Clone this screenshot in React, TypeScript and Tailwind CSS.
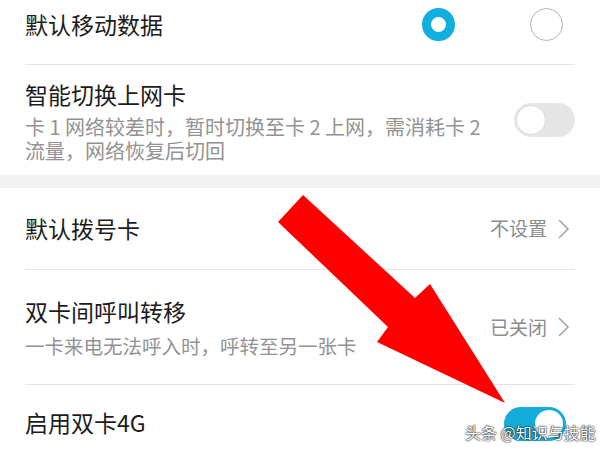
import React from 'react'

const font = { fontFamily: '"Noto Sans CJK SC", "Noto Sans", sans-serif' }

function Chevron() {
    return (
        <svg width="13" height="22" viewBox="0 0 13 22" className="ml-[10px]">
            <path
                d="M2 2 L11 11 L2 20"
                fill="none"
                stroke="#a6a6a6"
                strokeWidth="1.6"
            />
        </svg>
    )
}

function Toggle({ on }: { on: boolean }) {
    return on ? (
        <div className="w-[62px] h-[34px] rounded-full bg-[#14acdb] flex items-center justify-end p-[3px]">
            <div className="w-[28px] h-[28px] rounded-full bg-white" />
        </div>
    ) : (
        <div className="w-[61px] h-[34px] rounded-full bg-[#e6e6e6] flex items-center p-[2px]">
            <div className="w-[30px] h-[30px] rounded-full bg-white border border-[#dcdcdc]" />
        </div>
    )
}

export default function App() {
    return (
        <div
            className="relative w-[600px] h-[455px] overflow-hidden bg-white"
            style={font}
        >
            <div className="mx-[25px] h-[65px] pb-[15px] flex items-center border-b border-[#e3e3e3]">
                <span className="text-[23px] text-[#1c1c1c]">默认移动数据</span>
                <div className="ml-auto flex items-center gap-[75px] mr-[12px]">
                    <div className="w-[33px] h-[33px] rounded-full border-[9px] border-[#10afe0] bg-white" />
                    <div className="w-[33px] h-[33px] rounded-full border-[1.5px] border-[#b3b3b3]" />
                </div>
            </div>

            <div className="mx-[25px] h-[110px] flex items-center">
                <div className="flex flex-col pt-[2px]">
                    <span className="text-[23px] leading-[30px] text-[#1c1c1c]">
                        智能切换上网卡
                    </span>
                    <span className="mt-[6px] text-[20px] leading-[24px] text-[#929292]">
                        卡 1 网络较差时，暂时切换至卡 2 上网，需消耗卡 2
                        <br />
                        流量，网络恢复后切回
                    </span>
                </div>
                <div className="ml-auto">
                    <Toggle on={false} />
                </div>
            </div>

            <div className="h-[13px] bg-[#f2f2f2]" />

            <div className="mx-[25px] h-[82px] flex items-center border-b border-[#e3e3e3]">
                <span className="text-[23px] text-[#1c1c1c]">默认拨号卡</span>
                <div className="ml-auto flex items-center mr-[5px]">
                    <span className="text-[19px] text-[#8c8c8c]">不设置</span>
                    <Chevron />
                </div>
            </div>

            <div className="mx-[25px] h-[115px] flex items-center border-b border-[#e3e3e3]">
                <div className="flex flex-col">
                    <span className="text-[23px] leading-[30px] text-[#1c1c1c]">
                        双卡间呼叫转移
                    </span>
                    <span className="mt-[8px] text-[19.5px] leading-[24px] text-[#929292]">
                        一卡来电无法呼入时，呼转至另一张卡
                    </span>
                </div>
                <div className="ml-auto flex items-center mr-[5px]">
                    <span className="text-[19px] text-[#8c8c8c]">已关闭</span>
                    <Chevron />
                </div>
            </div>

            <div className="mx-[25px] h-[78px] flex items-center">
                <span className="text-[23px] text-[#1c1c1c] mt-[-3px]">启用双卡4G</span>
                <div className="ml-auto mr-[9px]">
                    <Toggle on={true} />
                </div>
            </div>

            {/* red arrow drawn over the screenshot */}
            <svg
                className="absolute left-0 top-0"
                width="600"
                height="455"
                viewBox="0 0 600 455"
            >
                <polygon
                    points="303,195 415,298 430,284 505,403 377,342 388,327 278,222"
                    fill="#ff0000"
                />
            </svg>

            <div className="absolute left-[465px] top-[421px] text-[16px] leading-[22px] text-white [text-shadow:0_0_2px_#000,0_0_1px_#000]">
                头条 @知识与技能
            </div>
        </div>
    )
}
